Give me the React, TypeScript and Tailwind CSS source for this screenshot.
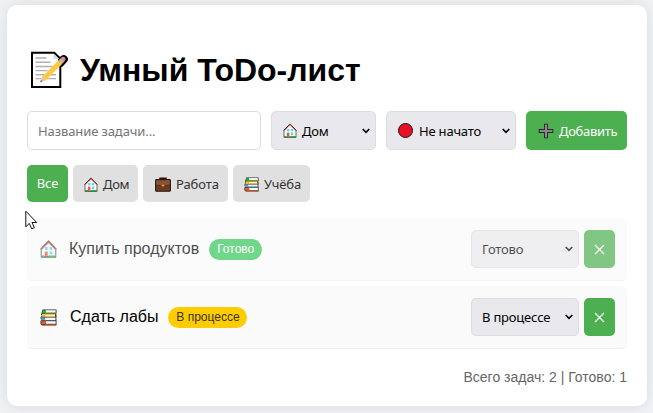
import React from 'react';

type IconProps = { className?: string };

function NoteIcon({ className = '' }: IconProps) {
  return (
    <svg className={className} width="38" height="38" viewBox="0 0 38 38" fill="none">
      <path d="M2 1.7h22.3L30.3 7.6V36H2z" fill="#fff" stroke="#000" strokeWidth="2" />
      <path d="M23.6 2.8v5.3h5.2z" fill="#d8d8d8" />
      <path d="M5.5 7h11M5.5 11.3h15M5.5 15.5h17M5.5 19.6h12M5.5 23.7h9M5.5 27.6h6M20 23.7h6M17 27.6h9" stroke="#b0b0b0" strokeWidth="1.4" />
      <path d="M29.5 9l2.3-2.6c2.6-2.4 6 .9 3.9 3.6L31.5 14.5" fill="#e98b80" stroke="#000" strokeWidth="3" strokeLinecap="round" />
      <path d="M10.4 31l2.1-5.6L28.6 9.2l3.7 3.6L16 29z" fill="#ffc83d" />
      <path d="M28.6 9.2l2-2 3.6 3.6-2 2z" fill="#c9b9a8" />
      <path d="M30.6 7.2l1-1c2.2-1.8 5 1 3.4 3.3L34 10.7z" fill="#e98b80" />
      <path d="M10.2 31.2l2.2-5.7 3.6 3.5z" fill="#eac3a2" />
      <path d="M10.2 31.2l.8-2.2 1.4 1.4z" fill="#555" />
    </svg>
  );
}

function HouseIcon({ className = 'h-4 w-[15px]' }: IconProps) {
  return (
    <svg className={`shrink-0 ${className}`} viewBox="0 0 17 17" preserveAspectRatio="none">
      <path d="M1.2 8.2v7.6h14.6V8.2L8.5 1.4z" fill="#f6f6f6" stroke="#3c4a55" strokeWidth=".9" />
      <path d="M.7 8.6L8.5 1l7.8 7.6" fill="none" stroke="#4a2a26" strokeWidth="1" />
      <path d="M1.5 8.9L8.5 2.1l7 6.8" fill="none" stroke="#dc5a45" strokeWidth="1.1" />
      <path d="M5 6.7h2.7v2.7H5zM9.6 6.7h2.7v2.7H9.6zM9.6 10.9h2.7v2.7H9.6z" fill="#50d8fa" />
      <path d="M4.8 10.9h2.9v4.4H4.8z" fill="#ef5546" />
      <path d="M.8 16.2h15.4" stroke="#1d4a20" strokeWidth=".9" />
      <path d="M1.4 15.2h3.2M8.2 15.2h7.4" stroke="#30b840" strokeWidth="1.2" />
    </svg>
  );
}

function BooksIcon({ className = 'h-[15px] w-[15px]' }: IconProps) {
  return (
    <svg className={`shrink-0 ${className}`} viewBox="0 0 17 17">
      <path d="M2.5.5h14v4l-.7.6.7.7v3l-.7.6.7.6v6.5H2L.5 15v-3l1-1-.9-1.4V8L2 7l-.9-1.2.4-1.6z" fill="#2a2420" />
      <path d="M5.5 1.2h10.2v2.6H5.5z" fill="#fafafa" />
      <path d="M2.4 1.2h3.2v3.2H2.4z" fill="#18b03a" />
      <path d="M5 3.7h10.7v.8H5z" fill="#58a52c" />
      <path d="M5 5.2h10.2v2.3H5z" fill="#fff6cf" />
      <path d="M2 4.8h3v3H2zM5 7.2h10.2V8H5zM5 4.7h10.2v.7H5z" fill="#f9bd22" />
      <path d="M4.5 8.5h11v2.5h-11z" fill="#eef7ff" />
      <path d="M1.2 8.3h3.4v3.1H1.2zM4.5 10.9h11v.7h-11z" fill="#4b9fe8" />
      <path d="M5.8 12.2h9.9v2.7H5.8z" fill="#fafafa" />
      <path d="M1.3 12h4.5v3.6H1.3zM5.8 14.8h9.9v.9H5.8z" fill="#f3541e" />
    </svg>
  );
}

function BriefcaseIcon() {
  return (
    <svg className="shrink-0" width="16" height="15" viewBox="0 0 16 15">
      <path d="M5 3V1.2h6V3" fill="none" stroke="#25150e" strokeWidth="1.5" />
      <rect x=".6" y="2.6" width="14.8" height="11.6" rx=".8" fill="#6a3a22" stroke="#2b1a13" strokeWidth="1.1" />
      <path d="M1.2 3.2h13.6v4.6L9.5 9h-3L1.2 7.8z" fill="#8b5130" />
      <path d="M1.2 7.9L6.5 9.1h3l5.3-1.2" fill="none" stroke="#4d2b1d" strokeWidth=".9" />
      <path d="M6.8 7.8h2.4v1.6H6.8z" fill="#f5a623" />
    </svg>
  );
}

function PlusIcon() {
  return (
    <svg width="16" height="16" viewBox="0 0 16 16" className="shrink-0">
      <path d="M6 .7h4V6h5.3v4H10v5.3H6V10H.7V6H6z" fill="#26242a" />
      <path d="M6.9 1.6h2.2v5.3h5.3v2.2H9.1v5.3H6.9V9.1H1.6V6.9h5.3z" fill="#8d8691" />
    </svg>
  );
}

function Chevron() {
  return (
    <svg width="8" height="6" viewBox="0 0 8 6" className="ml-auto shrink-0" fill="none">
      <path d="M.7 1L4 4.3 7.3 1" stroke="currentColor" strokeWidth="1.6" />
    </svg>
  );
}

function DropDown({ className, children }: { className: string; children: React.ReactNode }) {
  return (
    <button
      type="button"
      className={`flex shrink-0 items-center rounded-[5px] border border-[#ddd] bg-[#e9e9ed] tracking-[-0.2px] text-black ${className}`}
    >
      {children}
      <Chevron />
    </button>
  );
}

type TaskProps = {
  icon: React.ReactNode;
  title: string;
  badge: string;
  badgeClass: string;
  status: string;
  done?: boolean;
};

function Task({ icon, title, badge, badgeClass, status, done }: TaskProps) {
  return (
    <li className={`flex h-[63px] items-center rounded-[5px] border-b border-[#eee] bg-[#fafafa] px-3 ${done ? 'opacity-70' : ''}`}>
      <span className={`shrink-0 pl-px ${done ? 'w-[30px]' : 'w-[31px]'}`}>{icon}</span>
      <span className="font-['Liberation_Sans',sans-serif] text-base whitespace-nowrap">{title}</span>
      <span className={`ml-[10px] flex h-[21px] items-center justify-center rounded-full font-['Liberation_Sans',sans-serif] text-xs whitespace-nowrap ${badgeClass}`}>
        {badge}
      </span>
      <div className="ml-auto flex gap-[5px]">
        <DropDown className="h-[38px] w-[108px] pr-[5px] pl-[10px]">
          <span>{status}</span>
        </DropDown>
        <button className="flex h-[38px] w-[31px] items-center justify-center rounded-[5px] bg-[#4caf50] text-white">
          <svg width="11" height="11" viewBox="0 0 11 11" fill="none">
            <path d="M1 1l9 9M10 1l-9 9" stroke="currentColor" strokeWidth="1.1" />
          </svg>
        </button>
      </div>
    </li>
  );
}

export default function App() {
  return (
    <div className="h-[413px] w-[653px] overflow-hidden bg-[#f0f2f5] pt-[5px] pl-[7px] font-['Noto_Sans',sans-serif] text-[13px] leading-[18px]">
      <main className="h-[401px] w-[640px] rounded-[10px] bg-white px-5 pt-[46px] shadow-[0_0_15px_rgba(0,0,0,0.1)]">
        <h1 className="flex h-[38px] items-center pl-[3px] font-['Liberation_Sans',sans-serif] text-[32px] font-bold whitespace-nowrap">
          <NoteIcon className="mr-[12px] shrink-0" />
          <span>Умный ToDo-лист</span>
        </h1>

        <form className="mt-[22px] flex h-[39px] gap-[10px]">
          <input
            className="w-[234px] shrink-0 rounded-[5px] border border-[#ddd] bg-white px-[10px] tracking-[-0.1px] placeholder:text-[#757575]"
            placeholder="Название задачи..."
          />
          <DropDown className="w-[105px] pr-[5px] pl-[11px]">
            <HouseIcon className="mr-[5px] h-[15px] w-[14px]" />
            <span>Дом</span>
          </DropDown>
          <DropDown className="w-[130px] pr-[5px] pl-[11px]">
            <span className="mr-[6px] h-[15px] w-[15px] rounded-full border border-[#171717] bg-[#e81224]" />
            <span>Не начато</span>
          </DropDown>
          <button type="button" className="flex w-[101px] items-center gap-[5px] rounded-[5px] bg-[#4caf50] pl-[12px] tracking-[-0.3px] whitespace-nowrap text-white">
            <PlusIcon />
            <span>Добавить</span>
          </button>
        </form>

        <nav className="mt-[15px] flex h-[37px] gap-[5px] tracking-[-0.1px] text-[#333]">
          <button className="w-[41px] rounded-[5px] bg-[#4caf50] pb-px text-white">Все</button>
          <button className="flex w-[65px] items-center gap-[5px] rounded-[5px] bg-[#e0e0e0] pt-px pl-[11px] tracking-[-0.3px]">
            <HouseIcon className="h-[15px] w-[14px]" />
            <span>Дом</span>
          </button>
          <button className="flex w-[85px] items-center gap-[5px] rounded-[5px] bg-[#e0e0e0] pt-px pl-[12px]">
            <BriefcaseIcon />
            <span>Работа</span>
          </button>
          <button className="flex w-[77px] items-center gap-[5px] rounded-[5px] bg-[#e0e0e0] pt-px pl-[11px]">
            <BooksIcon />
            <span>Учёба</span>
          </button>
        </nav>

        <ul className="mt-4 flex flex-col gap-[5px]">
          <Task icon={<HouseIcon className="h-[18px] w-[17px]" />} title="Купить продуктов" badge="Готово" badgeClass="w-[53px] bg-[#34c759] text-white" status="Готово" done />
          <Task icon={<BooksIcon className="h-[17px] w-[17px]" />} title="Сдать лабы" badge="В процессе" badgeClass="w-[79px] bg-[#ffcc00] text-[#333]" status="В процессе" />
        </ul>

        <p className="mt-[18px] text-right font-['Liberation_Sans',sans-serif] text-sm text-[#666]">Всего задач: 2 | Готово: 1</p>
      </main>

      <svg className="absolute top-[210px] left-[25px]" width="13" height="21" viewBox="0 0 13 21">
        <path d="M.8 1.2v15.6l3.5-3.4 2.4 5.4 2.6-1.1L7 12.5h4.7z" fill="#fff" stroke="#111" strokeWidth="1" />
      </svg>
    </div>
  );
}
